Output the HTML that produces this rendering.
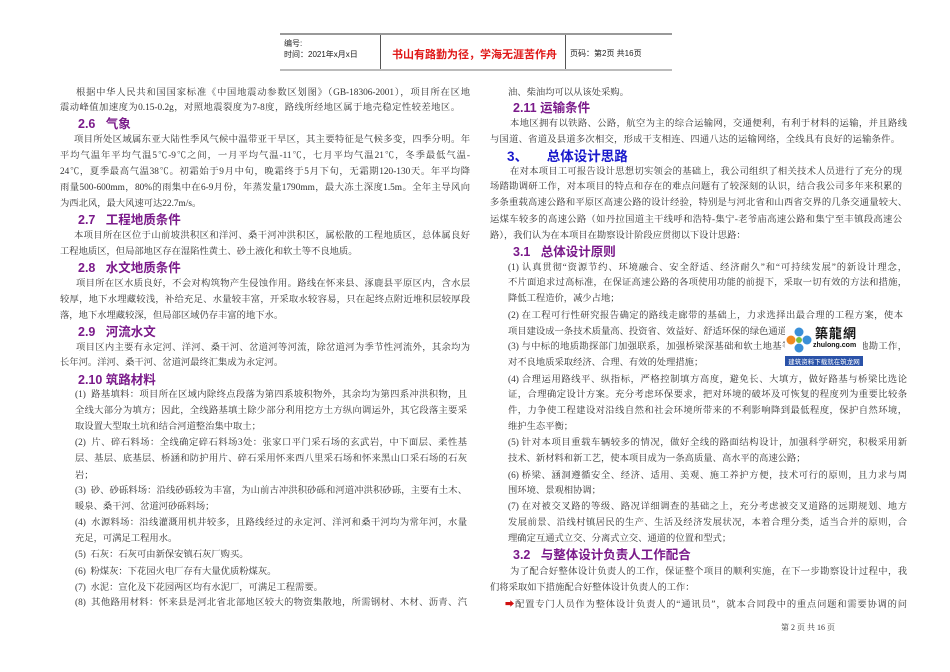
<!DOCTYPE html>
<html><head><meta charset="utf-8">
<style>
body{margin:0;width:950px;height:672px;background:#fff;position:relative;overflow:hidden;font-family:"Liberation Serif","Noto Serif CJK SC","Noto Sans CJK SC",serif;color:#333}
.l{position:absolute;font-size:9.3px;line-height:16px;height:16px;white-space:nowrap;text-align:justify;text-align-last:justify;overflow:visible}
.e{text-align-last:left}
.h{position:absolute;font-size:12.5px;line-height:16px;font-weight:bold;color:#7a1a8a;white-space:nowrap;font-family:"Liberation Sans","Noto Sans CJK SC",sans-serif}
.hb{color:#1a1acc;font-size:13.5px}
.L{left:60px;width:410px}.Li{left:76px;width:394px}.Lt{left:75px;width:392px}
.R{left:490px;width:417px}.Ri{left:510px;width:397px}.Rt{left:508px;width:399px}
</style></head><body>
<div style="position:absolute;left:280px;top:33px;width:392px;height:34px;border-top:2px solid #999;border-bottom:2px solid #bbb;font-family:'Liberation Sans','Noto Sans CJK SC',sans-serif;">
<div style="position:absolute;left:100px;top:0;width:1px;height:34px;background:#555"></div>
<div style="position:absolute;left:285px;top:0;width:1px;height:34px;background:#555"></div>
<div style="position:absolute;left:4px;top:3px;font-size:8px;line-height:11px;color:#222">编号:<br>时间：2021年x月x日</div>
<div style="position:absolute;left:112px;top:11px;font-size:11px;font-weight:bold;color:#e01818;white-space:nowrap">书山有路勤为径，学海无涯苦作舟</div>
<div style="position:absolute;left:290px;top:13px;font-size:8px;color:#222;white-space:nowrap">页码：第2页 共16页</div>
</div>

<div class="l Li" style="top:85px">根据中华人民共和国国家标准《中国地震动参数区划图》（GB-18306-2001），项目所在区地</div>
<div class="l L" style="top:100px;width:400px">震动峰值加速度为0.15-0.2g，对照地震裂度为7-8度，路线所经地区属于地壳稳定性较差地区。</div>
<div class="h" style="left:78px;top:116px">2.6&nbsp;&nbsp;&nbsp;气象</div>
<div class="l" style="top:132px;left:74px;width:396px">项目所处区域属东亚大陆性季风气候中温带亚干旱区，其主要特征是气候多变，四季分明。年</div>
<div class="l L" style="top:148px">平均气温年平均气温5℃-9℃之间，一月平均气温-11℃，七月平均气温21℃，冬季最低气温-</div>
<div class="l L" style="top:164px">24℃，夏季最高气温38℃。初霜始于9月中旬，晚霜终于5月下旬，无霜期120-130天。年平均降</div>
<div class="l L" style="top:180px">雨量500-600mm，80%的雨集中在6-9月份，年蒸发量1790mm，最大冻土深度1.5m。全年主导风向</div>
<div class="l L e" style="top:196px">为西北风，最大风速可达22.7m/s。</div>
<div class="h" style="left:78px;top:212px">2.7&nbsp;&nbsp;&nbsp;工程地质条件</div>
<div class="l" style="top:228px;left:74px;width:396px">本项目所在区位于山前坡洪积区和洋河、桑干河冲洪积区，属松散的工程地质区，总体属良好</div>
<div class="l L e" style="top:244px">工程地质区，但局部地区存在湿陷性黄土、砂土液化和软土等不良地质。</div>
<div class="h" style="left:78px;top:260px">2.8&nbsp;&nbsp;&nbsp;水文地质条件</div>
<div class="l Li" style="top:276px">项目所在区水质良好，不会对构筑物产生侵蚀作用。路线在怀来县、涿鹿县平原区内，含水层</div>
<div class="l L" style="top:292px">较厚，地下水埋藏较浅，补给充足、水量较丰富，开采取水较容易，只在起终点附近堆积层较厚段</div>
<div class="l L e" style="top:308px">落，地下水埋藏较深，但局部区域仍存丰富的地下水。</div>
<div class="h" style="left:78px;top:324px">2.9&nbsp;&nbsp;&nbsp;河流水文</div>
<div class="l Li" style="top:340px">项目区内主要有永定河、洋河、桑干河、岔道河等河流，除岔道河为季节性河流外，其余均为</div>
<div class="l L e" style="top:355px">长年河。洋河、桑干河、岔道河最终汇集成为永定河。</div>
<div class="h" style="left:78px;top:372px">2.10 筑路材料</div>
<div class="l Lt" style="top:387px">(1)&nbsp;&nbsp;路基填料：项目所在区域内除终点段落为第四系坡积物外，其余均为第四系冲洪积物，且</div>
<div class="l Lt" style="top:403px">全线大部分为填方；因此，全线路基填土除少部分利用挖方土方纵向调运外，其它段落主要采</div>
<div class="l Lt e" style="top:419px">取设置大型取土坑和结合河道整治集中取土；</div>
<div class="l Lt" style="top:435px">(2)&nbsp;&nbsp;片、碎石料场：全线确定碎石料场3处：张家口平门采石场的玄武岩，中下面层、柔性基</div>
<div class="l Lt" style="top:451px">层、基层、底基层、桥涵和防护用片、碎石采用怀来西八里采石场和怀来黑山口采石场的石灰</div>
<div class="l Lt e" style="top:468px">岩；</div>
<div class="l Lt" style="top:483px">(3)&nbsp;&nbsp;砂、砂砾料场：沿线砂砾较为丰富，为山前古冲洪积砂砾和河道冲洪积砂砾，主要有土木、</div>
<div class="l Lt e" style="top:499px">暖泉、桑干河、岔道河砂砾料场；</div>
<div class="l Lt" style="top:515px">(4)&nbsp;&nbsp;水源料场：沿线灌溉用机井较多，且路线经过的永定河、洋河和桑干河均为常年河，水量</div>
<div class="l Lt e" style="top:531px">充足，可满足工程用水。</div>
<div class="l Lt e" style="top:547px">(5)&nbsp;&nbsp;石灰：石灰可由新保安镇石灰厂购买。</div>
<div class="l Lt e" style="top:564px">(6)&nbsp;&nbsp;粉煤灰：下花园火电厂存有大量优质粉煤灰。</div>
<div class="l Lt e" style="top:580px">(7)&nbsp;&nbsp;水泥：宣化及下花园两区均有水泥厂，可满足工程需要。</div>
<div class="l Lt" style="top:595px">(8)&nbsp;&nbsp;其他路用材料：怀来县是河北省北部地区较大的物资集散地，所需钢材、木材、沥青、汽</div>

<div class="l Rt e" style="top:85px">油、柴油均可以从该处采购。</div>
<div class="h" style="left:513px;top:100px">2.11 运输条件</div>
<div class="l Ri" style="top:116px">本地区拥有以铁路、公路，航空为主的综合运输网，交通便利，有利于材料的运输，并且路线</div>
<div class="l R" style="top:132px;width:410px">与国道、省道及县道多次相交，形成干支相连、四通八达的运输网络，全线具有良好的运输条件。</div>
<div class="h hb" style="left:507px;top:149px">3、&nbsp;&nbsp;&nbsp;&nbsp;&nbsp;总体设计思路</div>
<div class="l Ri" style="top:164px;width:392px">在对本项目工可报告设计思想切实领会的基础上，我公司组织了相关技术人员进行了充分的现</div>
<div class="l R" style="top:179px;width:412px">场踏勘调研工作，对本项目的特点和存在的难点问题有了较深刻的认识，结合我公司多年来积累的</div>
<div class="l R" style="top:195px">多条重载高速公路和平原区高速公路的设计经验，特别是与河北省和山西省交界的几条交通量较大、</div>
<div class="l R" style="top:212px;width:412px">运煤车较多的高速公路（如丹拉国道主干线呼和浩特-集宁-老爷庙高速公路和集宁至丰镇段高速公</div>
<div class="l R e" style="top:228px">路），我们认为在本项目在勘察设计阶段应贯彻以下设计思路：</div>
<div class="h" style="left:513px;top:244px">3.1&nbsp;&nbsp;&nbsp;总体设计原则</div>
<div class="l Rt" style="top:260px">(1) 认真贯彻“资源节约、环境融合、安全舒适、经济耐久”和“可持续发展”的新设计理念，</div>
<div class="l Rt" style="top:275px">不片面追求过高标准，在保证高速公路的各项使用功能的前提下，采取一切有效的方法和措施，</div>
<div class="l Rt e" style="top:291px">降低工程造价，减少占地；</div>
<div class="l Rt" style="top:308px;width:395px">(2) 在工程可行性研究报告确定的路线走廊带的基础上，力求选择出最合理的工程方案，使本</div>
<div class="l Rt e" style="top:324px">项目建设成一条技术质量高、投资省、效益好、舒适环保的绿色通道；</div>
<div class="l Rt" style="top:339px">(3) 与中标的地质勘探部门加强联系，加强桥梁深基础和软土地基等不良地质路段的地勘工作，</div>
<div class="l Rt e" style="top:355px">对不良地质采取经济、合理、有效的处理措施；</div>
<div class="l Rt" style="top:372px">(4) 合理运用路线平、纵指标，严格控制填方高度，避免长、大填方，做好路基与桥梁比选论</div>
<div class="l Rt" style="top:387px">证，合理确定设计方案。充分考虑环保要求，把对环境的破坏及可恢复的程度列为重要比较条</div>
<div class="l Rt" style="top:403px">件，力争使工程建设对沿线自然和社会环境所带来的不利影响降到最低程度，保护自然环境，</div>
<div class="l Rt e" style="top:419px">维护生态平衡；</div>
<div class="l Rt" style="top:435px">(5) 针对本项目重载车辆较多的情况，做好全线的路面结构设计，加强科学研究，积极采用新</div>
<div class="l Rt e" style="top:451px">技术、新材料和新工艺，使本项目成为一条高质量、高水平的高速公路；</div>
<div class="l Rt" style="top:468px">(6) 桥梁、涵洞遵循安全、经济、适用、美观、施工养护方便，技术可行的原则，且力求与周</div>
<div class="l Rt e" style="top:483px">围环境、景观相协调；</div>
<div class="l Rt" style="top:499px">(7) 在对被交叉路的等级、路况详细调查的基础之上，充分考虑被交叉道路的远期规划、地方</div>
<div class="l Rt" style="top:515px">发展前景、沿线村镇居民的生产、生活及经济发展状况，本着合理分类，适当合并的原则，合</div>
<div class="l Rt e" style="top:531px">理确定互通式立交、分离式立交、通道的位置和型式；</div>
<div class="h" style="left:513px;top:547px">3.2&nbsp;&nbsp;&nbsp;与整体设计负责人工作配合</div>
<div class="l Ri" style="top:564px">为了配合好整体设计负责人的工作，保证整个项目的顺利实施，在下一步勘察设计过程中，我</div>
<div class="l R e" style="top:580px">们将采取如下措施配合好整体设计负责人的工作：</div>
<div class="l" style="top:597px;left:505px;width:402px"><span style="color:#d01010">➡</span>配置专门人员作为整体设计负责人的“通讯员”，就本合同段中的重点问题和需要协调的问</div>
<div style="position:absolute;left:781px;top:622px;font-size:8px;color:#333;white-space:nowrap">第 2 页 共 16 页</div>

<div style="position:absolute;left:785px;top:325px;width:78px;height:42px;background:#fff">
<svg width="26" height="30" viewBox="0 0 26 30" style="position:absolute;left:1px;top:1px">
<circle cx="13" cy="6" r="4.5" fill="#3a8fd8"/><circle cx="5" cy="14" r="4.5" fill="#f08a20"/>
<circle cx="21" cy="14" r="4.5" fill="#3a8fd8"/><circle cx="13" cy="22" r="4.5" fill="#3a8fd8"/>
<circle cx="13" cy="14" r="3" fill="#7bbf3a"/></svg>
<div style="position:absolute;left:30px;top:0;font-size:13px;font-weight:bold;color:#111;font-family:'Noto Sans CJK TC',sans-serif;line-height:16px;letter-spacing:1px">築龍網</div>
<div style="position:absolute;left:28px;top:17px;font-size:7px;font-weight:bold;color:#111;font-family:'Liberation Sans',sans-serif">zhulong.com</div>
<div style="position:absolute;left:0;top:31px;width:78px;height:10px;background:#2a52a8;color:#fff;font-size:6.5px;line-height:10px;text-align:center;font-family:'Noto Sans CJK SC',sans-serif;white-space:nowrap">建筑资料下载就在筑龙网</div>
</div>
</body></html>
